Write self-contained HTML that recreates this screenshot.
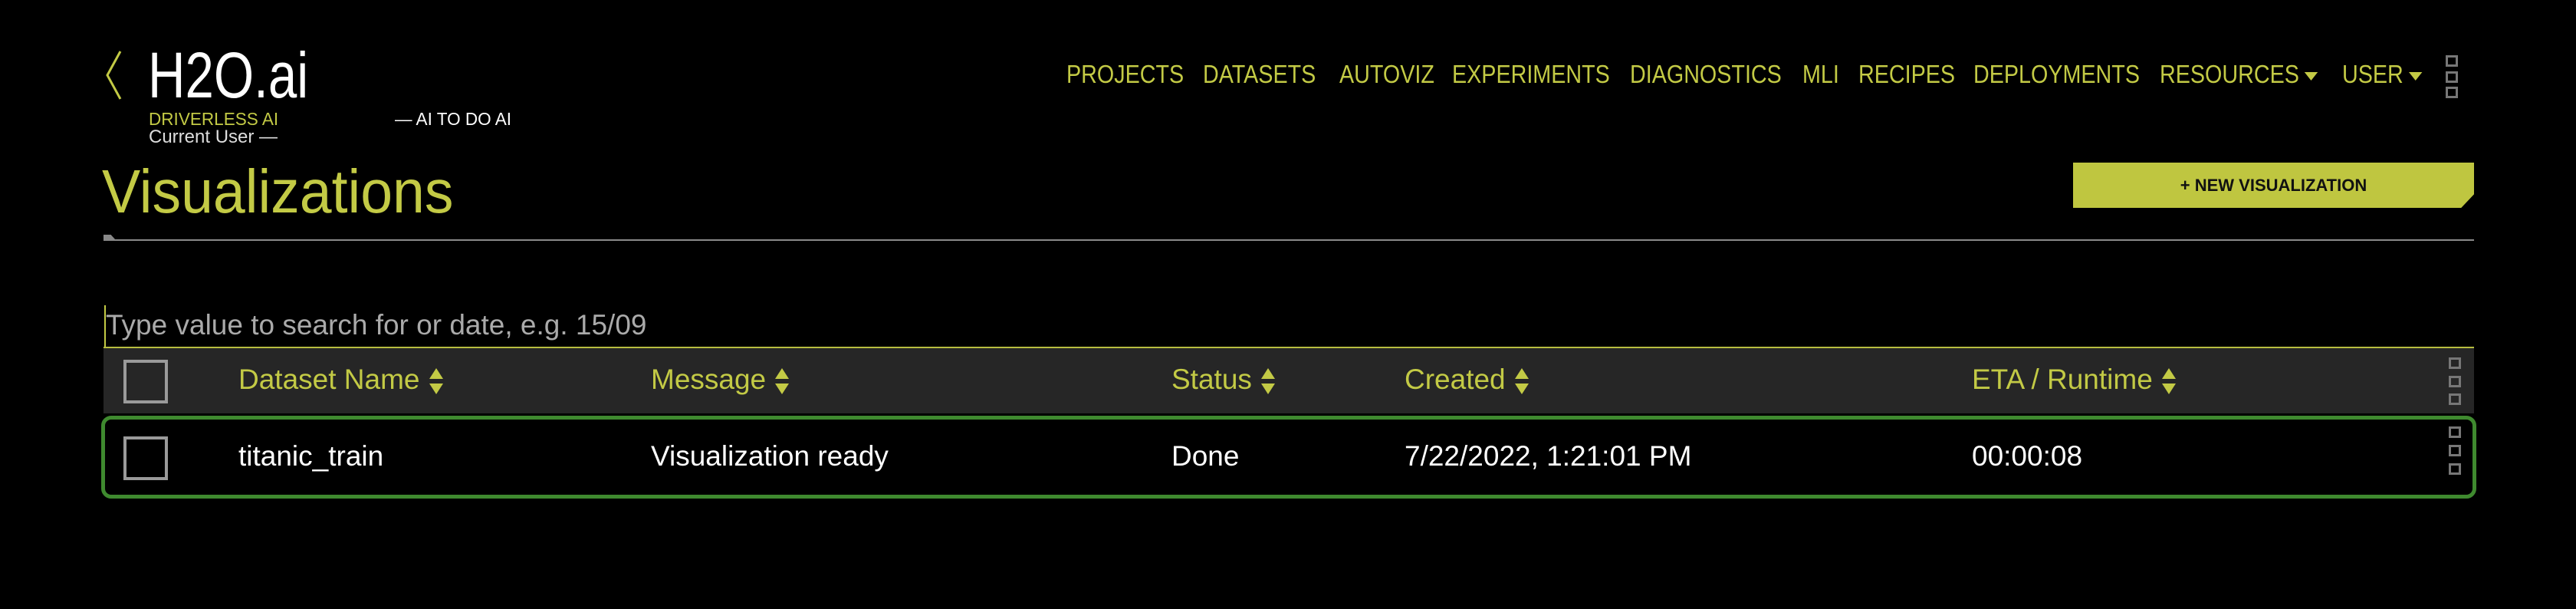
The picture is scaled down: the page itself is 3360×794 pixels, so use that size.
<!DOCTYPE html>
<html><head><meta charset="utf-8"><style>
*{margin:0;padding:0;box-sizing:border-box}
body{width:3360px;height:794px;background:#000;position:relative;overflow:hidden;font-family:"Liberation Sans",sans-serif}
.a{position:absolute;white-space:nowrap;transform-origin:left center}
.y{color:#c3ca45}
.nav{top:78px;font-size:33px;color:#c3ca45;transform:scaleX(.87)}
.tri{display:inline-block;width:0;height:0;border-left:10px solid transparent;border-right:10px solid transparent;border-top:11px solid #c3ca45;vertical-align:middle;margin-left:8px}
.dot{position:absolute;width:16px;height:15px;border:3px solid #777}
.cb{position:absolute;width:58px;height:57px;border:4px solid #9a9a9a}
.hd{top:474px;font-size:37px;color:#c3ca45;transform:scaleX(1.0)}
.rw{top:574px;font-size:37px;color:#fff;transform:scaleX(1.0)}
.sort{display:inline-block;vertical-align:middle;margin-left:12px;width:18px;height:34px;position:relative}
.sort:before{content:"";position:absolute;top:0;left:0;border-left:9px solid transparent;border-right:9px solid transparent;border-bottom:14px solid #c3ca45}
.sort:after{content:"";position:absolute;bottom:0;left:0;border-left:9px solid transparent;border-right:9px solid transparent;border-top:14px solid #c3ca45}
</style></head><body>
<svg class="a" style="left:136px;top:65px" width="24" height="66" viewBox="0 0 24 66"><path d="M21 2 L4 33 L21 64" fill="none" stroke="#c3ca45" stroke-width="3"/></svg>
<div class="a" style="left:193px;top:50px;font-size:84px;color:#fff;transform:scaleX(.8);font-weight:300">H2O.ai</div>
<div class="a y" style="left:194px;top:142px;font-size:23px;transform:scaleX(.98)">DRIVERLESS AI</div>
<div class="a" style="left:515px;top:142px;font-size:23px;color:#fff;transform:scaleX(.98)">— AI TO DO AI</div>
<div class="a" style="left:194px;top:165px;font-size:24px;color:#ddd;transform:scaleX(1.0)">Current User —</div>
<div class="a y" style="left:133px;top:204px;font-size:80px;transform:scaleX(.94)">Visualizations</div>
<div class="a" style="left:135px;top:312px;width:3092px;height:2px;background:#8a8a8a"></div>
<div class="a" style="left:135px;top:306px;width:16px;height:7px;background:#888;clip-path:polygon(0 0,60% 0,100% 100%,0 100%)"></div>

<div class="a nav" style="left:1391px">PROJECTS</div>
<div class="a nav" style="left:1569px">DATASETS</div>
<div class="a nav" style="left:1747px">AUTOVIZ</div>
<div class="a nav" style="left:1894px">EXPERIMENTS</div>
<div class="a nav" style="left:2126px">DIAGNOSTICS</div>
<div class="a nav" style="left:2351px">MLI</div>
<div class="a nav" style="left:2424px">RECIPES</div>
<div class="a nav" style="left:2574px">DEPLOYMENTS</div>
<div class="a nav" style="left:2817px">RESOURCES<span class="tri"></span></div>
<div class="a nav" style="left:3055px">USER<span class="tri"></span></div>
<div class="dot" style="left:3190px;top:72px"></div>
<div class="dot" style="left:3190px;top:93px"></div>
<div class="dot" style="left:3190px;top:113px"></div>

<div class="a" style="left:2704px;top:212px;width:523px;height:59px;background:#bfc640;clip-path:polygon(0 0,100% 0,100% 70%,96.8% 100%,0 100%)"></div>
<div class="a" style="left:2704px;top:212px;width:523px;height:59px;line-height:59px;text-align:center;font-size:22px;font-weight:bold;color:#111">+ NEW VISUALIZATION</div>

<div class="a" style="left:136px;top:398px;width:2px;height:54px;background:#c3ca45"></div>
<div class="a" style="left:138px;top:403px;font-size:37px;color:#aaa;transform:scaleX(1.0)">Type value to search for or date, e.g. 15/09</div>
<div class="a" style="left:135px;top:452px;width:3092px;height:2px;background:#b7bd40"></div>
<div class="a" style="left:135px;top:454px;width:3092px;height:85px;background:#262626"></div>
<div class="cb" style="left:161px;top:469px"></div>
<div class="a hd" style="left:311px">Dataset Name<span class="sort"></span></div>
<div class="a hd" style="left:849px">Message<span class="sort"></span></div>
<div class="a hd" style="left:1528px">Status<span class="sort"></span></div>
<div class="a hd" style="left:1832px">Created<span class="sort"></span></div>
<div class="a hd" style="left:2572px">ETA / Runtime<span class="sort"></span></div>
<div class="dot" style="left:3194px;top:466px"></div>
<div class="dot" style="left:3194px;top:490px"></div>
<div class="dot" style="left:3194px;top:513px"></div>

<div class="a" style="left:132px;top:542px;width:3098px;height:108px;border:5px solid #3f8a2f;border-radius:13px"></div>
<div class="cb" style="left:161px;top:569px"></div>
<div class="a rw" style="left:311px">titanic_train</div>
<div class="a rw" style="left:849px">Visualization ready</div>
<div class="a rw" style="left:1528px">Done</div>
<div class="a rw" style="left:1832px">7/22/2022, 1:21:01 PM</div>
<div class="a rw" style="left:2572px">00:00:08</div>
<div class="dot" style="left:3194px;top:556px"></div>
<div class="dot" style="left:3194px;top:580px"></div>
<div class="dot" style="left:3194px;top:604px"></div>
</body></html>
